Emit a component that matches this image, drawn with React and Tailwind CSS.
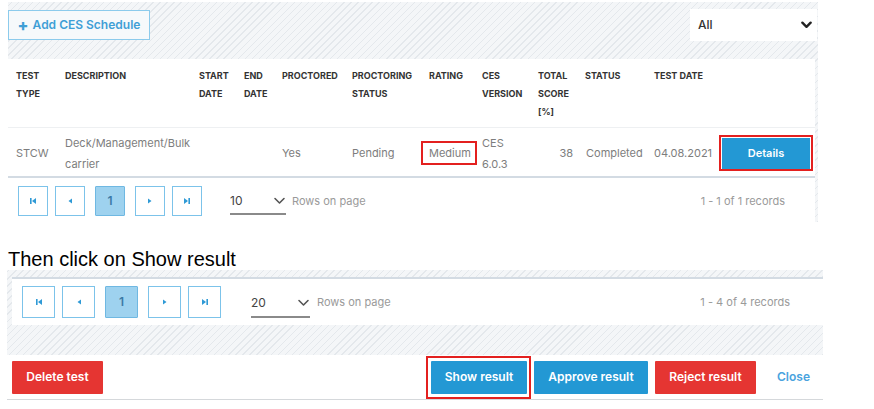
import React from "react";

const hatch =
  "bg-[repeating-linear-gradient(-45deg,#e4e8ec_0px,#e4e8ec_1px,#f4f6f8_1px,#f4f6f8_5px)]";

function Chev({ className, w = 3 }) {
  return (
    <svg viewBox="0 0 12 8" className={className} fill="none" stroke="currentColor" strokeWidth={w} strokeLinecap="round" strokeLinejoin="round">
      <path d="M1.5 1.5 L6 6 L10.5 1.5" />
    </svg>
  );
}

function PgIcon({ kind }) {
  return (
    <svg viewBox="0 0 8 8" className="w-[8px] h-[8px] text-[#2f9ad6]" fill="currentColor">
      {kind === "first" && (
        <>
          <rect x="1" y="1" width="1.6" height="6" />
          <polygon points="7,1 7,7 3,4" />
        </>
      )}
      {kind === "prev" && <polygon points="6,1.5 6,6.5 2.5,4" />}
      {kind === "next" && <polygon points="2,1.5 2,6.5 5.5,4" />}
      {kind === "last" && (
        <>
          <polygon points="1,1 1,7 5,4" />
          <rect x="5.4" y="1" width="1.6" height="6" />
        </>
      )}
    </svg>
  );
}

function Pager({ size, gapsmall, gapbig }) {
  const box =
    size === 30 ? "w-[30px] h-[30px]" : "w-[33px] h-[32px]";
  const btn = `${box} border border-[#7cc3ea] bg-white flex items-center justify-center`;
  return (
    <div className="flex items-center">
      <div className={btn}><PgIcon kind="first" /></div>
      <div className={`${btn} ${gapsmall}`}><PgIcon kind="prev" /></div>
      <div className={`${box} ${gapbig} border border-[#6fb8e2] bg-[#9ed2ef] rounded-[1px] flex items-center justify-center text-[12px] font-semibold text-[#3b7aa6]`}>1</div>
      <div className={`${btn} ${gapbig}`}><PgIcon kind="next" /></div>
      <div className={`${btn} ${gapsmall}`}><PgIcon kind="last" /></div>
    </div>
  );
}

const cols = [49, 134, 45, 38, 70, 77, 53, 56, 47, 69, 68];

export default function App() {
  const head = [
    ["TEST", "TYPE"],
    ["DESCRIPTION"],
    ["START", "DATE"],
    ["END", "DATE"],
    ["PROCTORED"],
    ["PROCTORING", "STATUS"],
    ["RATING"],
    ["CES", "VERSION"],
    ["TOTAL", "SCORE", "[%]"],
    ["STATUS"],
    ["TEST DATE"],
  ];
  return (
    <div className="w-[874px] h-[409px] bg-white overflow-hidden font-['Inter',sans-serif]">
      {/* Section 1 */}
      <div className={`ml-[8px] mt-[2px] w-[810px] h-[220px] flex flex-col ${hatch}`}>
        <div className="h-[57px] flex justify-between items-start">
          <button className="mt-[8px] h-[30px] w-[142px] border border-[#8ccbec] bg-[#f6f9fb] text-[#3f9fd6] text-[12px] font-semibold flex items-center justify-center gap-[4px]">
            <span className="text-[16px] font-extrabold leading-none -mt-[1px]">+</span>
            <span>Add CES Schedule</span>
          </button>
          <div className="mt-[7px] mr-[1px] h-[32px] w-[127px] bg-white flex items-center justify-between pl-[8px] pr-[5px] text-[12px] text-[#333] font-medium">
            <span>All</span>
            <Chev className="w-[11px] h-[8px] text-[#222]" w={2.6} />
          </div>
        </div>
        <div className="w-[807px] flex-1 bg-white flex flex-col">
          <div className="h-[69px] pt-[8px] pl-[8px] flex border-b border-[#eef0f2]">
            {head.map((h, i) => (
              <div key={i} style={{ width: cols[i] }} className="shrink-0 text-[9px] font-bold leading-[18px] text-[#333]">
                {h.map((l, j) => (
                  <div key={j} className="whitespace-nowrap">{l}</div>
                ))}
              </div>
            ))}
          </div>
          <div className="h-[50px] pt-[3px] pl-[8px] flex items-center border-b-2 border-[#d3dbe3] text-[11px] leading-[21px] text-[#7d7d7d]">
            <div className="w-[49px] shrink-0">STCW</div>
            <div className="w-[134px] shrink-0">
              <div>Deck/Management/Bulk</div>
              <div>carrier</div>
            </div>
            <div className="w-[45px] shrink-0" />
            <div className="w-[38px] shrink-0" />
            <div className="w-[70px] shrink-0">Yes</div>
            <div className="w-[77px] shrink-0">Pending</div>
            <div className="w-[53px] shrink-0">
              <span className="relative">
                Medium
                <span className="absolute -left-[8px] -right-[6px] -top-[5px] -bottom-[5px] border-2 border-[#e3201f]" />
              </span>
            </div>
            <div className="w-[56px] shrink-0">
              <div>CES</div>
              <div>6.0.3</div>
            </div>
            <div className="w-[47px] shrink-0 text-right pr-[12px]">38</div>
            <div className="w-[69px] shrink-0 pl-[1px]">Completed</div>
            <div className="w-[68px] shrink-0">04.08.2021</div>
            <div className="relative shrink-0">
              <button className="w-[88px] h-[31px] bg-[#2398d4] text-white text-[11px] font-semibold">Details</button>
              <span className="absolute -left-[3px] -right-[3px] -top-[3px] -bottom-[2px] border-2 border-[#e3201f]" />
            </div>
          </div>
          <div className="flex-1 flex items-start pt-[8px] pl-[10px] pr-[30px]">
            <Pager size={30} gapsmall="ml-[7px]" gapbig="ml-[10px]" />
            <div className="ml-[28px] mt-[2px] w-[56px] h-[27px] border-b-2 border-[#8a8a8a] flex items-center justify-between text-[12px] text-[#444]">
              <span>10</span>
              <Chev className="w-[13px] h-[8px] text-[#555]" w={1.6} />
            </div>
            <span className="ml-[6px] mt-[7px] text-[11px] text-[#9a9a9a]">Rows on page</span>
            <span className="ml-auto mt-[7px] text-[11px] text-[#9a9a9a]">1 - 1 of 1 records</span>
          </div>
        </div>
      </div>

      {/* Instruction text */}
      <div className="mt-[25px] ml-[8px] h-[23px] text-[20px] leading-[24px] text-black font-['Liberation_Sans',Arial,sans-serif]">
        Then click on Show result
      </div>

      {/* Section 2 */}
      <div className={`ml-[7px] w-[816px] h-[85px] pt-[7px] pl-[5px] ${hatch}`}>
        <div className="h-[48px] border-t-2 border-[#d3dbe3] bg-white flex items-center pl-[10px] pr-[33px]">
          <Pager size={33} gapsmall="ml-[7px]" gapbig="ml-[10px]" />
          <div className="ml-[30px] mt-[4px] w-[59px] h-[27px] border-b-2 border-[#8a8a8a] flex items-center justify-between text-[12px] text-[#444]">
            <span>20</span>
            <Chev className="w-[13px] h-[8px] text-[#555]" w={1.6} />
          </div>
          <span className="ml-[7px] text-[11px] text-[#9a9a9a]">Rows on page</span>
          <span className="ml-auto text-[11px] text-[#9a9a9a]">1 - 4 of 4 records</span>
        </div>
      </div>
      <div className="ml-[7px] w-[816px] h-[45px] border-b border-[#d5d8db] flex items-center justify-between pl-[5px] pr-[13px]">
        <button className="w-[91px] h-[33px] bg-[#e53532] text-white text-[12px] font-semibold rounded-[1px]">Delete test</button>
        <div className="flex items-center">
          <div className="relative">
            <button className="w-[96px] h-[33px] bg-[#2398d4] text-white text-[12px] font-semibold rounded-[1px]">Show result</button>
            <span className="absolute -left-[5px] -right-[4px] -top-[5px] -bottom-[5px] border-2 border-[#e3201f]" />
          </div>
          <button className="ml-[7px] w-[114px] h-[33px] bg-[#2398d4] text-white text-[12px] font-semibold rounded-[1px]">Approve result</button>
          <button className="ml-[7px] w-[101px] h-[33px] bg-[#e53532] text-white text-[12px] font-semibold rounded-[1px]">Reject result</button>
          <span className="ml-[21px] text-[12px] font-semibold text-[#4aa3de]">Close</span>
        </div>
      </div>
    </div>
  );
}
